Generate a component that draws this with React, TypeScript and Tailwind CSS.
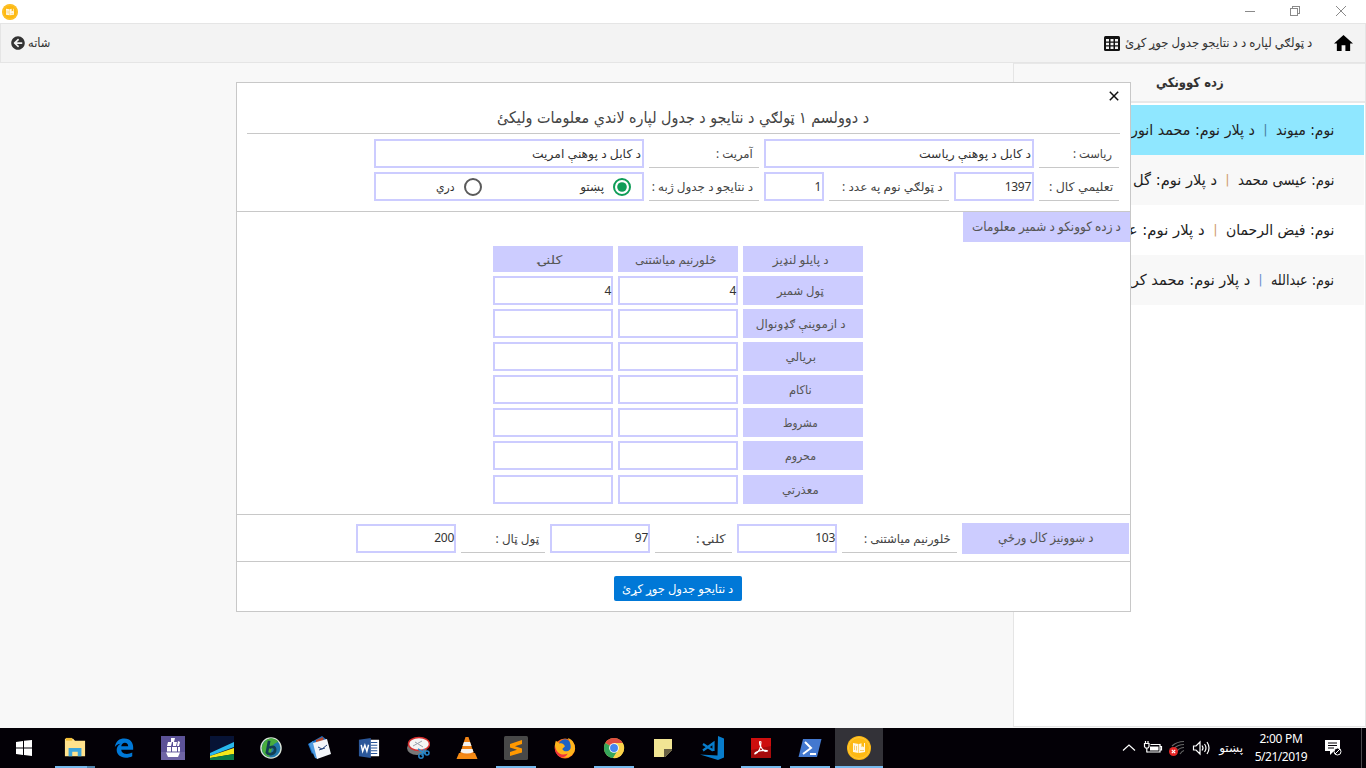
import { useLayoutEffect, useRef, useState } from "react";
import type { ReactNode } from "react";
import { FaArrowCircleLeft } from "react-icons/fa";

/* Keeps a run of Arabic-script text on one line and at an even, known width. */
function Fit({ w, children, className = "" }: { w: number; children: string; className?: string }) {
  const ref = useRef<HTMLSpanElement>(null);
  const [scale, setScale] = useState(1);
  useLayoutEffect(() => {
    if (ref.current && ref.current.offsetWidth) setScale(w / ref.current.offsetWidth);
  }, [w, children]);
  return (
    <span dir="rtl" className={`inline-flex shrink-0 justify-start ${className}`} style={{ width: w }}>
      <span ref={ref} className="inline-block shrink-0 origin-right whitespace-nowrap" style={{ transform: `scaleX(${scale})` }}>
        {children}
      </span>
    </span>
  );
}

function TitleBar() {
  return (
    <div className="flex h-[23px] shrink-0 items-center justify-between bg-white pl-[2px] pr-[18px]">
      <AppLogo className="h-4 w-4" />
      <svg className="-mt-[2px] h-[12px] w-[103px]" viewBox="0 0 103 12" fill="none" stroke="#8a8a8a" shapeRendering="crispEdges">
        <path d="M0 6.500h10" />
        <path d="M45.500 3.500h7v7h-7zM47.500 3.500v-2h7v7h-2" />
        <path d="M91 1l10 10M101 1l-10 10" shapeRendering="auto" />
      </svg>
    </div>
  );
}

function AppLogo({ className }: { className: string }) {
  return (
    <svg className={className} viewBox="0 0 24 24">
      <circle cx="12" cy="12" r="12" fill="#fdb913" />
      <circle cx="12" cy="12" r="10.500" fill="none" stroke="#ffc83b" />
      <path d="M6 7l5.500 1v9L6 16zM12 8l2.500-.8v4l1.200-1 1.300 1V7h1v9l-6 1z" fill="#fff8e4" />
      <path d="M7.500 9.500v4.500M9.500 10v4.500M13 14.500h4" stroke="#f4bd45" strokeWidth=".7" />
    </svg>
  );
}

function Header() {
  return (
    <div className="flex h-10 shrink-0 items-center justify-between border border-[#e5e5e5] bg-[#f3f3f3] pl-[10px] pr-[12px] text-[12.500px] text-[#333]">
      <div className="flex items-center gap-[3px]">
        <FaArrowCircleLeft className="h-[14px] w-[14px] text-[#333]" />
        <Fit w={22} className="pt-px">شاته</Fit>
      </div>
      <div className="flex items-center">
        <svg className="mr-[5px] h-[15px] w-4" viewBox="0 0 16 15">
          <rect width="16" height="15" rx="1.500" fill="#111" />
          <path d="M2 3h3v2.500H2zM6.500 3h3v2.500h-3zM11 3h3v2.500h-3zM2 6.800h3v2.500H2zM6.500 6.800h3v2.500h-3zM11 6.800h3v2.500h-3zM2 10.500h3V13H2zM6.500 10.500h3V13h-3zM11 10.500h3V13h-3z" fill="#f3f3f3" />
        </svg>
        <Fit w={187} className="pt-px">د ټولګي لپاره د د نتایجو جدول جوړ کړئ</Fit>
        <svg className="ml-[22px] h-4 w-[19px]" viewBox="2 3 20 17" preserveAspectRatio="none">
          <path d="M10 20v-6h4v6h5v-8h3L12 3 2 12h3v8z" fill="#000" />
        </svg>
      </div>
    </div>
  );
}

const students = [
  { name: "نوم: میوند", nw: 58, father: "د پلار نوم: محمد انور", fw: 124, bg: "bg-[#8fe7ff]", bar: "text-[#4b7fa3]" },
  { name: "نوم: عیسی محمد", nw: 96, father: "د پلار نوم: گل", fw: 84, bg: "bg-[#f8f8f8]", bar: "text-[#d0a070]" },
  { name: "نوم: فیض الرحمان", nw: 108, father: "د پلار نوم: عمر", fw: 93, bg: "bg-white", bar: "text-[#d0a070]" },
  { name: "نوم: عبدالله", nw: 63, father: "د پلار نوم: محمد کریم", fw: 132, bg: "bg-[#f8f8f8]", bar: "text-[#6f8fd0]" },
];

function Sidebar() {
  return (
    <aside dir="rtl" className="flex w-[353px] shrink-0 flex-col border border-t-0 border-[#e5e5e5] bg-white font-['DejaVu_Sans',sans-serif] text-[#222]">
      <div className="mb-[2px] flex h-10 items-center justify-center border-b-2 border-t border-[#e8e8e8] bg-[#f8f8f8] text-[13.500px] font-bold text-[#333]">
        <Fit w={68}>زده کوونکي</Fit>
      </div>
      {students.map((s) => (
        <div key={s.name} className={`mr-px flex h-[50px] items-center pr-[30px] text-[15px] ${s.bg}`}>
          <Fit w={s.nw}>{s.name}</Fit>
          <span className={`flex w-[21px] justify-center text-[13px] ${s.bar}`}>|</span>
          <Fit w={s.fw}>{s.father}</Fit>
        </div>
      ))}
    </aside>
  );
}

function Label({ w, text, className }: { w: number; text: string; className: string }) {
  return (
    <div className={`flex h-[29px] shrink-0 items-center border-b border-[#c8c8c8] pr-[6px] text-[12px] text-[#444] ${className}`}>
      <Fit w={w}>{text}</Fit>
    </div>
  );
}

function Box({ children, className }: { children?: ReactNode; className: string }) {
  return (
    <div className={`flex h-[29px] shrink-0 items-center border-2 border-[#ccccff] bg-white text-[12px] tracking-[-0.300px] text-[#333] ${className}`}>
      {children}
    </div>
  );
}

const summary = [
  { text: "ټول شمیر", w: 47, value: "4" },
  { text: "د ازموینې ګډونوال", w: 90, value: "" },
  { text: "بریالي", w: 31, value: "" },
  { text: "ناکام", w: 23, value: "" },
  { text: "مشروط", w: 35, value: "" },
  { text: "محروم", w: 31, value: "" },
  { text: "معذرتي", w: 37, value: "" },
];

function Modal() {
  return (
    <div dir="rtl" className="absolute left-[236px] top-[82px] flex h-[530px] w-[895px] flex-col border border-[#c8c8c8] bg-white">
      <div className="mx-[10px] flex h-[51px] flex-col border-b border-[#c8c8c8]">
        <svg className="mr-px mt-2 h-[10px] w-[10px] shrink-0" viewBox="0 0 10 10">
          <path d="M.8.8l8.400 8.400M9.200.8L.8 9.200" stroke="#111" strokeWidth="1.500" />
        </svg>
        <div className="mt-[3px] flex h-7 items-center justify-center font-['DejaVu_Sans',sans-serif] text-[16px] text-[#444]">
          <Fit w={372}>د دوولسم ۱ ټولګي د نتایجو د جدول لپاره لاندي معلومات ولیکئ</Fit>
        </div>
      </div>

      <div className="flex h-[78px] flex-col gap-1 border-b border-[#c8c8c8] pr-[11px] pt-[5px]">
        <div className="flex gap-[5px]">
          <Label w={39} text="ریاست :" className="w-[80px] pr-[7px]! pt-px" />
          <Box className="w-[270px] pr-px"><Fit w={112}>د کابل د پوهنې ریاست</Fit></Box>
          <Label w={37} text="آمریت :" className="w-[110px] pt-[2px]" />
          <Box className="w-[270px] pr-px"><Fit w={109}>د کابل د پوهنې امریت</Fit></Box>
        </div>
        <div className="flex gap-[5px]">
          <Label w={64} text="تعلیمي کال :" className="w-[80px] pt-[2px]" />
          <Box className="w-[80px] pr-px">1397</Box>
          <Label w={101} text="د ټولګي نوم په عدد :" className="w-[120px] pt-px" />
          <Box className="w-[60px] pr-px">1</Box>
          <Label w={101} text="د نتایجو د جدول ژبه :" className="w-[110px] pt-px" />
          <Box className="w-[270px] pr-px">
            <svg className="mr-[10px] h-[18px] w-[18px]" viewBox="0 0 18 18">
              <circle cx="9" cy="9" r="8" fill="none" stroke="#0f9d58" strokeWidth="2" />
              <circle cx="9" cy="9" r="4.800" fill="#0f9d58" />
            </svg>
            <Fit w={24} className="mr-[9px]">پښتو</Fit>
            <svg className="mr-[98px] h-[18px] w-[18px]" viewBox="0 0 18 18">
              <circle cx="9" cy="9" r="8" fill="none" stroke="#5a5a5a" strokeWidth="2" />
            </svg>
            <Fit w={19} className="mr-[9px]">دري</Fit>
          </Box>
        </div>
      </div>

      <div className="flex h-[303px] shrink-0 flex-col border-b border-[#c8c8c8]">
        <div className="flex h-[30px] w-[167px] shrink-0 items-center justify-center bg-[#ccccff] text-[13px] text-[#555]">
          <Fit w={149}>د زده کوونکو د شمیر معلومات</Fit>
        </div>
        <div className="mr-[267px] mt-1 grid w-[370px] grid-cols-3 gap-x-[5px] gap-y-1 text-[12px] text-[#555]">
          <div className="flex h-[26px] items-center justify-center bg-[#ccccff] pl-[5px] pt-px"><Fit w={56} className="-ml-[10px]">د پایلو لنډیز</Fit></div>
          <div className="flex h-[26px] items-center justify-center bg-[#ccccff] pr-[4px] pt-px"><Fit w={81}>څلورنیم میاشتنی</Fit></div>
          <div className="flex h-[26px] items-center justify-center bg-[#ccccff] pr-[5px] pt-px"><Fit w={24}>کلنۍ</Fit></div>
          {summary.map((r, i) => (
            <div key={r.text} className={`col-span-3 grid grid-cols-3 gap-x-[5px] ${i === 6 ? "mt-px" : ""}`}>
              <div className="flex h-[29px] items-center justify-center bg-[#ccccff] pr-[5px]"><Fit w={r.w}>{r.text}</Fit></div>
              <Box className="w-[120px]">{r.value}</Box>
              <Box className="w-[120px]">{r.value}</Box>
            </div>
          ))}
        </div>
      </div>

      <div className="flex h-[47px] shrink-0 items-center gap-[5px] border-b border-[#c8c8c8] pr-px">
        <div className="flex h-[31px] w-[167px] items-center justify-center bg-[#ccccff] text-[12.500px] text-[#555]">
          <Fit w={96}>د ښوونیز کال ورځې</Fit>
        </div>
        <Label w={87} text="څلورنیم میاشتنی :" className="w-[115px] pt-[3px]" />
        <Box className="w-[100px]">103</Box>
        <Label w={30} text="کلنۍ :" className="w-[77px] pt-[3px]" />
        <Box className="w-[100px]">97</Box>
        <Label w={43} text="ټول ټال :" className="w-[84px] pt-[3px]" />
        <Box className="w-[100px]">200</Box>
      </div>

      <div className="flex justify-start pr-[388px] pt-[14px]">
        <button className="flex h-[25px] w-[128px] items-center justify-center rounded-[2px] bg-[#0078d7] text-[12px] text-white">
          <Fit w={111}>د نتایجو جدول جوړ کړئ</Fit>
        </button>
      </div>
    </div>
  );
}

const taskIcons: { id: string; open?: boolean; art: ReactNode }[] = [
  { id: "explorer", open: true, art: <><path d="M1 2h9l2 2h11v17H1z" fill="#ffe28c" /><path d="M2 1h7v3H2z" fill="#f2bd35" /><path d="M5 12h14v9h-4v-5H9v5H5z" fill="#3ca5dc" /></> },
  { id: "edge", art: <path d="M2 11C3 4 7 1.500 12.500 1.500 19 1.500 22 6 22 11v3H9c.3 3.200 3 4.500 6 4.500 2.300 0 4.300-.7 6-1.600v4c-2 1.100-4.300 1.600-7 1.600-6 0-10-3.200-10-8.500 0-3 1.700-5.500 4.300-6.700C5.500 7.600 3.500 8.900 2 11zm7-.8h7.600C16.500 7.700 15.200 6.300 13 6.300S9.400 7.800 9 10.200z" fill="#0078d7" /> },
  { id: "ship", art: <><path d="M0 0h24v24H0z" fill="#5c5297" /><path d="M0 16h24v8H0z" fill="#7b73af" opacity=".6" /><path d="M10 2h4l-1 4h-3zM7 6h4l-1 4H6zM12 6h4l-1 4h-3zM17 5l2 1-1 4h-2zM6 11h4v4.500H6zM11 11h5v4.500h-5zM17 11h2v4.500h-2zM5 16.500h14l-2 4.500H7z" fill="#fff" /></> },
  { id: "stripes", art: <><path d="M0 0h24v24H0z" fill="#071335" /><path d="M0 17L24 6v5L0 20z" fill="#28b8ec" /><path d="M0 20l24-8v6L0 22z" fill="#f5e719" /><path d="M0 22l24-4v6H0z" fill="#0c7c48" /></> },
  { id: "b", art: <><circle cx="12" cy="12" r="11" fill="#1f77aa" stroke="#dce5d8" strokeWidth="1.500" /><path d="M3 8a10 10 0 0117-3l-5 3-5 14a10 10 0 01-7-14z" fill="#48ad3d" /><path d="M10 4L7.500 17c2 3 9 2 9-3 0-4-4-4-6.500-2" fill="none" stroke="#123d52" strokeWidth="3" /></> },
  { id: "notes", art: <><path d="M0 8L14 0l5 4-15 14z" fill="#1b6fc4" /><path d="M1 8l4-3 5 18-3-1z" fill="#4e9ae0" /><path d="M8 4l7-3 1 4-8 3z" fill="#b3482d" /><path d="M5 7l14-4 4 15-14 5z" fill="#f3f5fa" /><path d="M10 11l4 2 5-4M11 14l6-2" stroke="#26447c" fill="none" /></> },
  { id: "word", art: <><path d="M12 3h11v18H12z" fill="#fff" /><path d="M14 6h7M14 9h7M14 12h7M14 15h7M14 18h7" stroke="#2b579a" strokeWidth="1.300" /><path d="M1 3l13-2v22L1 21z" fill="#2b579a" /><path d="M3.500 8.500l1.600 7L7.500 9l2.200 6.500 1.800-7" fill="none" stroke="#fff" strokeWidth="1.600" /></> },
  { id: "snip", art: <><ellipse cx="11" cy="12" rx="10" ry="7" fill="#777" /><ellipse cx="13" cy="8" rx="10.500" ry="6.500" fill="#f5f5f5" stroke="#d62e2e" strokeWidth="1.500" /><path d="M7 10l9-5M9 6l8 5" stroke="#9aa2ad" /><path d="M12 13l8 5M18 13l-2 7" stroke="#2e8cc9" strokeWidth="1.500" /><circle cx="15" cy="20" r="2.200" fill="none" stroke="#2583c6" strokeWidth="1.500" /><circle cx="21" cy="17" r="2" fill="none" stroke="#2583c6" strokeWidth="1.500" /></> },
  { id: "vlc", art: <><path d="M4 17h16l2.500 6h-21z" fill="#f58a13" /><path d="M10.500 1h3L19 18q-7 4-14 0z" fill="#f08316" /><path d="M9 6h6l1.500 4h-9zM6.500 13h11l1 3q-6.500 3-13 0z" fill="#f4f2ef" /></> },
  { id: "sublime", open: true, art: <><rect width="24" height="24" rx="1.500" fill="#484848" /><path d="M6 8l12-4v4l-7 2.300 7 2.200v4L6 20v-4l7-2.200L6 11.500z" fill="#ff9800" /></> },
  { id: "firefox", art: <><circle cx="12" cy="12.500" r="11" fill="#ff6a18" /><circle cx="12" cy="9.500" r="7" fill="#1d62c4" /><path d="M2 4l4 3c3-1 5 1 6 3l-3 3c2 4 7 3 9 0 1-4-1-9-3-12 6 2 8 7 8 12A10.800 10.800 0 012 15C0 11 1 8 2 4z" fill="#ffb51c" /><path d="M1 9c1 9 8 12 14 9-2 4-6 5-9 3.500C2 19 0 14 1 9z" fill="#f0333c" /></> },
  { id: "chrome", open: true, art: <><circle cx="12" cy="12" r="11" fill="#fbd34b" /><path d="M12 12L2.500 6.500A11 11 0 0121.500 6.500H12z" fill="#de4d40" /><path d="M12 12l-9.500-5.500A11 11 0 0011 23l5.500-9z" fill="#36a65b" /><path d="M21.500 6.500H12l4.500 8L11 23A11 11 0 0021.500 6.500z" fill="#fbd34b" /><circle cx="12" cy="12" r="5.300" fill="#fff" /><circle cx="12" cy="12" r="4.300" fill="#4586ee" /></> },
  { id: "sticky", art: <><path d="M3 3h18v11l-7 7H3z" fill="#f1e594" /><path d="M13 13h8v1l-7 7h-1z" fill="#686044" /></> },
  { id: "vscode", art: <><path d="M18 0l6 2.500v19L18 24 0 18.500l17.500 1z" fill="#087ccb" /><path d="M3 8l10 6.500M3 14.500L13.500 7v8" fill="none" stroke="#087ccb" strokeWidth="2.200" /></> },
  { id: "acrobat", open: true, art: <><path d="M2 2h20v20H2z" fill="#a60b0b" /><path d="M2 2h20v8L2 14z" fill="#e01010" opacity=".7" /><path d="M6 18c4-2 6-7 6-12-2-2-2 2 0 5 1.500 3 4 5 6.500 4 1-1-7-1-11 1-2 1-2 2-1.500 2z" fill="none" stroke="#fff" strokeWidth="1.100" /></> },
  { id: "powershell", open: true, art: <><path d="M5 3h18.500L19 21H.5z" fill="#4378cf" /><path d="M7 6l6 6-8 6M12 18h6" fill="none" stroke="#fff" strokeWidth="2" /></> },
];

const smallArt = ["explorer", "edge", "b", "firefox", "chrome", "word"];

function Taskbar() {
  return (
    <div className="flex h-10 shrink-0 bg-[#030006] text-white">
      <div className="flex w-[50px] items-center pl-4">
        <svg className="h-4 w-4" viewBox="0 0 16 16"><path d="M0 2l7-1v6.500H0zM8 .8L16 0v7.500H8zM0 8.500h7V15l-7-1zM8 8.500h8V16l-8-1z" fill="#fff" /></svg>
      </div>
      {taskIcons.map((t) => (
        <div key={t.id} className="flex w-[49px] flex-col items-center justify-end">
          <svg className={smallArt.includes(t.id) ? "mb-[7px] h-[22px] w-[22px]" : "mb-[6px] h-6 w-6"} viewBox="0 0 24 24">{t.art}</svg>
          <div className={`flex h-[2px] w-10 justify-end ${t.open ? "bg-[#76b9ed]" : ""}`}>
            {t.id === "explorer" && <div className="h-[2px] w-2 bg-[#5085ad]" />}
          </div>
        </div>
      ))}
      <div className="ml-px flex w-12 flex-col items-center justify-end bg-[#333238]">
        <AppLogo className="mb-[6px] h-6 w-6" />
        <div className="h-[2px] w-full bg-[#76b9ed]" />
      </div>
      <div className="ml-auto flex items-center">
        <svg className="h-[22px] w-[90px]" viewBox="0 0 90 22" fill="none" stroke="#fff" strokeWidth="1.200">
          <path d="M1 13.500L7 8l6 5.500" />
          <path d="M28.500 7.500H38v7.500H25M38 9.500h1.500v3.500H38" />
          <path d="M28 9.500h8.500v4H28z" fill="#fff" stroke="none" />
          <path d="M22.500 6.500h4.500v3l-1 1.500h-2.500l-1-1.500zM23.500 6.500V4M26 6.500V4M24.800 11v4.500" />
          <path d="M50 9q5-4.500 12-4.500M52 11.500q4-4 10-4M55 14q3-3.500 7-3.500M58 17q2-3 4-3.500" stroke="#666" />
          <circle cx="51.500" cy="14.500" r="4.500" fill="#e52525" stroke="none" />
          <path d="M49.800 12.800l3.400 3.400M53.200 12.800l-3.400 3.400" />
          <path d="M71.500 9h2.500l4-4v12l-4-4h-2.500zM80 8.500q2 2.500 0 5M82.500 7q3 4 0 8M85 5q4 6 0 12" />
        </svg>
        <Fit w={24} className="ml-[7px] text-[12px]">پښتو</Fit>
        <div className="flex w-[76px] flex-col items-center text-[12px] leading-[18px]">
          <span className="tracking-[-0.300px]">2:00 PM</span>
          <span className="tracking-[-0.500px]">5/21/2019</span>
        </div>
        <svg className="ml-[6px] h-4 w-[17px]" viewBox="0 0 17 16">
          <path d="M0 0h15v11H9l-4 4v-4H0z" fill="#fff" />
          <path d="M3 3h9M3 5.500h9M3 8h6" stroke="#030006" />
          <circle cx="12.500" cy="11.500" r="3.500" fill="#030006" stroke="#fff" />
          <path d="M10 14l5-5" stroke="#fff" />
        </svg>
        <div className="ml-[19px] mr-1 h-10 w-px bg-[#4a484c]" />
      </div>
    </div>
  );
}

export default function App() {
  return (
    <div className="relative flex h-[768px] w-[1366px] flex-col overflow-hidden bg-[#f8f8f8] font-['Noto_Sans','DejaVu_Sans',sans-serif]">
      <TitleBar />
      <Header />
      <div className="flex min-h-0 flex-1 justify-end pb-px">
        <Sidebar />
      </div>
      <Taskbar />
      <Modal />
    </div>
  );
}
